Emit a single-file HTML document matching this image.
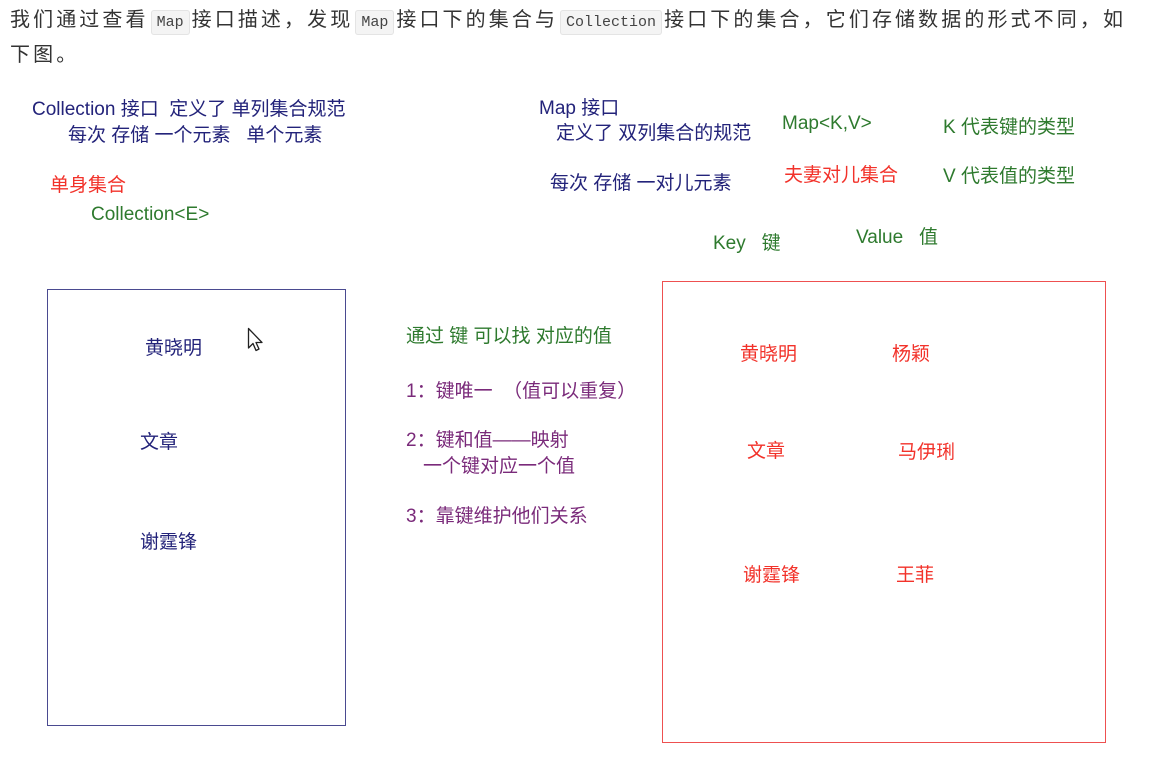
<!DOCTYPE html>
<html><head><meta charset="utf-8"><style>
body{margin:0;width:1153px;height:761px;background:#fff;position:relative;overflow:hidden;font-family:"Liberation Sans","Noto Sans CJK SC",sans-serif}
.t{position:absolute;white-space:pre;font-size:19px;line-height:19px}
.n{color:#23237a}.r{color:#f2322a}.g{color:#2e7a2e}.p{color:#7a2a7a}
.top{position:absolute;left:10px;top:4px;font-size:20px;line-height:33px;color:#333;letter-spacing:3.1px;width:1150px;white-space:nowrap}
code{font-family:"Liberation Mono",monospace;font-size:15px;letter-spacing:0;background:#f4f4f4;border:1px solid #e4e4e4;border-radius:3px;padding:3px 5px;margin:0 2px;color:#444}
.box{position:absolute;box-sizing:border-box}
</style></head><body>
<div class="top">我们通过查看<code>Map</code>接口描述，发现<code>Map</code>接口下的集合与<code>Collection</code>接口下的集合，它们存储数据的形式不同，如<br>下图。</div>

<div class="t n" style="left:32px;top:100px">Collection 接口  定义了 单列集合规范</div>
<div class="t n" style="left:68px;top:126px">每次 存储 一个元素   单个元素</div>
<div class="t r" style="left:50px;top:176px">单身集合</div>
<div class="t g" style="left:91px;top:205px">Collection&lt;E&gt;</div>

<div class="t n" style="left:539px;top:99px">Map 接口</div>
<div class="t n" style="left:556px;top:124px">定义了 双列集合的规范</div>
<div class="t n" style="left:550px;top:174px">每次 存储 一对儿元素</div>
<div class="t g" style="left:782px;top:114px">Map&lt;K,V&gt;</div>
<div class="t r" style="left:784px;top:166px">夫妻对儿集合</div>
<div class="t g" style="left:943px;top:118px">K 代表键的类型</div>
<div class="t g" style="left:943px;top:167px">V 代表值的类型</div>
<div class="t g" style="left:713px;top:234px">Key   键</div>
<div class="t g" style="left:856px;top:228px">Value   值</div>

<div class="t g" style="left:406px;top:327px">通过 键 可以找 对应的值</div>
<div class="t p" style="left:406px;top:382px">1：键唯一  （值可以重复）</div>
<div class="t p" style="left:406px;top:431px">2：键和值——映射</div>
<div class="t p" style="left:423px;top:457px">一个键对应一个值</div>
<div class="t p" style="left:406px;top:507px">3：靠键维护他们关系</div>

<div class="box" style="left:47px;top:289px;width:299px;height:437px;border:1.5px solid #4a4a90"></div>
<div class="t n" style="left:145px;top:339px">黄晓明</div>
<div class="t n" style="left:140px;top:433px">文章</div>
<div class="t n" style="left:140px;top:533px">谢霆锋</div>

<div class="box" style="left:662px;top:281px;width:444px;height:462px;border:1.5px solid #ee5050"></div>
<div class="t r" style="left:740px;top:345px">黄晓明</div>
<div class="t r" style="left:892px;top:345px">杨颖</div>
<div class="t r" style="left:747px;top:442px">文章</div>
<div class="t r" style="left:898px;top:443px">马伊琍</div>
<div class="t r" style="left:743px;top:566px">谢霆锋</div>
<div class="t r" style="left:896px;top:566px">王菲</div>

<svg style="position:absolute;left:247px;top:327px" width="20" height="28" viewBox="0 0 20 28"><path d="M1.5 1.5 L1.5 21 L6 16.5 L9 23.5 L12 22 L9 15.5 L15 15.5 Z" fill="#fff" stroke="#222" stroke-width="1.3" stroke-linejoin="round"/></svg>
</body></html>
